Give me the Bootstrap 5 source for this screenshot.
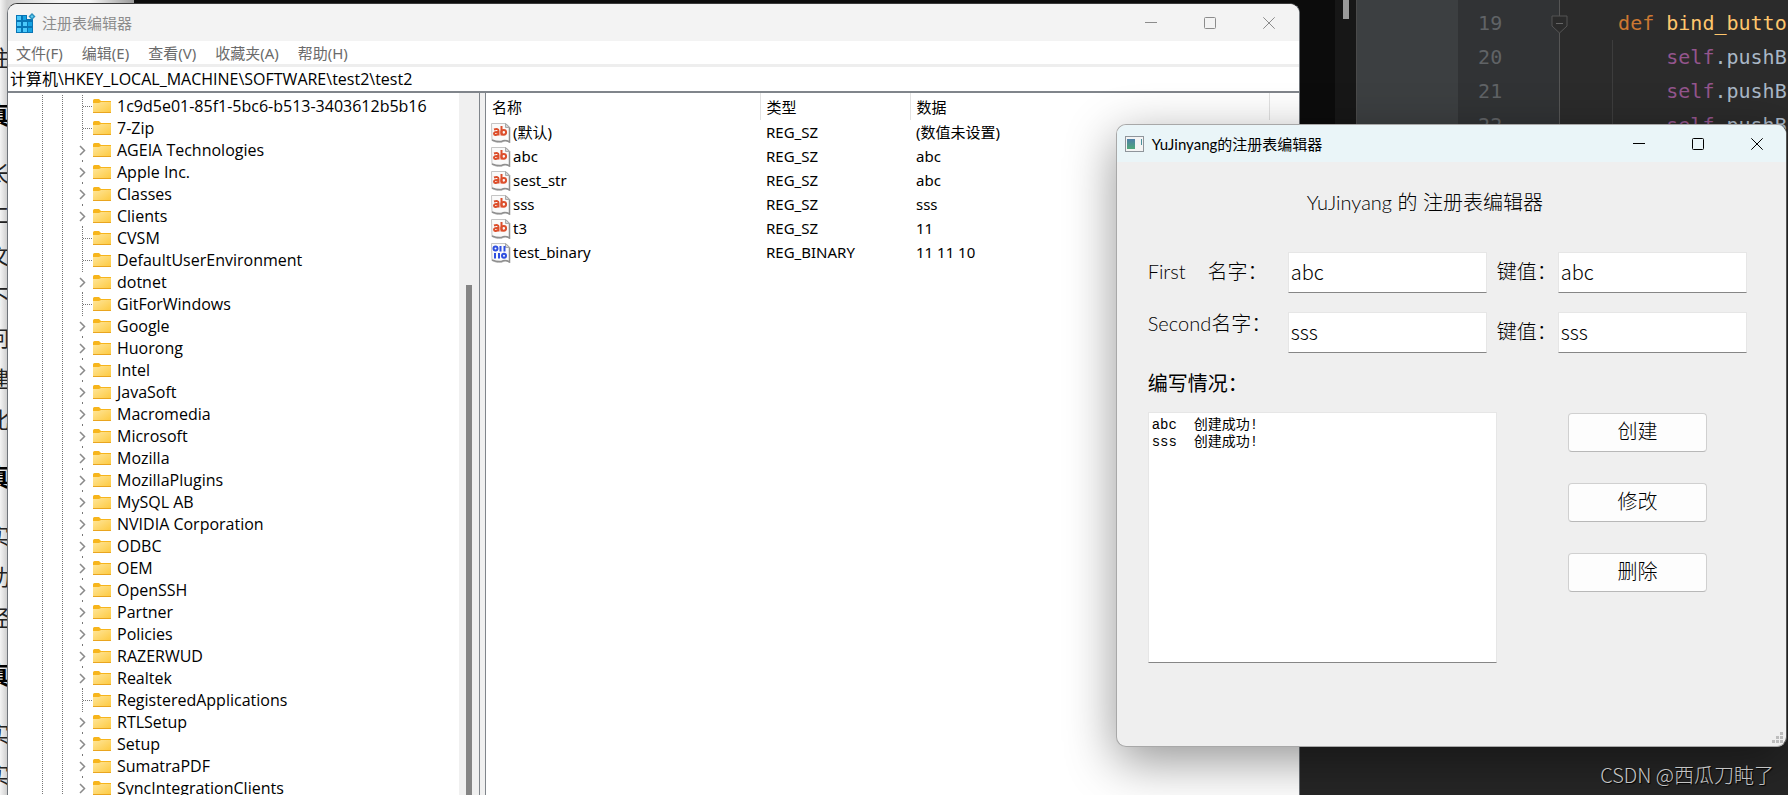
<!DOCTYPE html>
<html lang="zh-CN">
<head>
<meta charset="utf-8">
<meta name="viewport" content="width=device-width, initial-scale=1">
<title>注册表编辑器</title>
<link href="https://cdn.jsdelivr.net/npm/bootstrap@5.3.0/dist/css/bootstrap.min.css" rel="stylesheet">
<style>
  :root { --ui: "Noto Sans", "Noto Sans CJK SC", sans-serif; --form: Lato, "Noto Sans CJK SC", sans-serif; }
  body { font-family: var(--ui); font-size: 15px; line-height: 22px; color: #000; background: #0c0c0c; }
  .desktop { height: 100vh; min-height: 600px; }
  /* background windows */
  .note-page { width: 134px; background: linear-gradient(90deg, #f4f4f4, #cfcfcf 7px, #f4f4f4 60px, #f4f4f4 90px, #999); padding-top: 38px; font: 22px/41px "Liberation Serif", "Noto Sans CJK SC", serif; color: #222; }
  .note-page p { margin: 0 0 0 -12px; height: 41px; }
  .note-page .topic { font-weight: 700; height: 75px; line-height: 75px; margin-left: -14px; font-size: 24px; color: #000; }
  .term-scroll { width: 22px; background: #171717; border-right: 1px solid #4a4a4a; }
  .term-thumb { width: 6px; height: 19px; margin-left: 8px; background: #9a9a9a; }
  .ide { width: 24.1%; font: 20px/34px "DejaVu Sans Mono", monospace; background: #2b2b2b; color: #a9b7c6; white-space: pre; }
  .ide-side { width: 101px; background: #3c3f41; }
  .ide-gutter { width: 102px; padding: 6px 0 0 20px; background: #313335; color: #606366; border-right: 1px solid #555; }
  .ide-gutter svg { position: absolute; right: -9px; top: 15px; }
  .ide-code { padding: 6px 0 0 58px; }
  .kw { color: #cc7832; } .fn { color: #ffc66d; } .me { color: #94558d; }
  .ide-block { margin-left: -6px; padding-left: 5px; border-left: 1px solid #3d3d3d; }
  .ide-low { left: 72.6%; top: 722px; background: #262626; }
  /* windows */
  .win { position: absolute; display: flex; flex-direction: column; overflow: hidden; }
  .win-title { height: 37px; flex: none; }
  .win-btn { width: 59px; height: 37px; border: 0; background: none; padding: 0; display: flex; align-items: center; justify-content: center; color: inherit; }
  .regedit { left: 7px; right: 27.3%; top: 3px; bottom: 0; border: 1px solid #6e7379; border-top-color: #3a3a3a; border-bottom: 0; border-radius: 10px 10px 0 0; background: #fff; }
  .regedit .win-title { background: #f3f3f3; color: #8c8c8c; }
  .title-icon { margin: 0 6px 0 8px; }
  .regedit .menu-bar { height: 23px; gap: 19px; padding-left: 8px; }
  .menu-bar a { color: #6b6b6b; text-decoration: none; }
  .address { height: 29px; border: 0; border-top: 3px solid #eee; border-bottom: 2px solid #80858b; padding: 0 2px 2px; font-family: "Open Sans", "Noto Sans CJK SC", sans-serif; font-size: 16px; line-height: 22px; color: #000; outline: 0; flex: none; width: 100%; }
  .panes { min-height: 0; }
  .tree-pane { width: 472px; border-right: 1px solid #80858b; }
  .tree { margin: 0; padding: 2px 0 0; font-family: "Open Sans", sans-serif; font-size: 16px; }
  .tree li { height: 22px; display: flex; align-items: center; padding-left: 71px; white-space: pre;
    background: repeating-linear-gradient(#777 0 1px, #fff 1px 2px) 34px 0 / 1px 22px no-repeat, repeating-linear-gradient(#777 0 1px, #fff 1px 2px) 54px 0 / 1px 22px no-repeat; }
  .tree .twig { width: 14px; height: 22px; flex: none; }
  .tree .folder { margin-right: 6px; flex: none; }
  .tree-scroll { width: 20px; background: #f0f0f0; }
  .tree-thumb { width: 6px; margin: 192px 0 0 7px; background: #858585; }
  .splitter { width: 6px; background: #f0f0f0; border-right: 1px solid #80858b; }
  .values { width: 784px; table-layout: fixed; border-collapse: collapse; font-size: 15px; }
  .values th { font-weight: 400; height: 27px; padding: 0 0 0 6px; border-right: 1px solid #e2e2e2; }
  .values td { height: 24px; padding: 0 0 0 6px; white-space: nowrap; }
  .values td:first-child { padding-left: 5px; }
  .values svg { margin-right: 2px; }
  .app { left: 62.4%; right: 1px; top: 124px; height: 623px; border: 1px solid #a8a8a8; border-right-color: #555; border-radius: 10px; background: #efefef; box-shadow: 0 14px 50px rgba(0,0,0,.42); font-family: var(--form); }
  .app .win-title { background: #eaf5f8; }
  .app-body { padding: 28px 39px 0 31px; font-size: 20px; font-weight: 300; }
  .app-head { height: 24px; line-height: 24px; margin-bottom: 38px; padding-left: 159px; font-size: 20px; font-weight: 300; }
  .pair { margin-bottom: 19px; }
  .pair label { padding-bottom: 3px; }
  .name-label { width: 140px; }
  .key-label { width: 71px; padding-left: 10px; }
  .box, .log { min-width: 0; border: 1px solid #e6e6e6; border-bottom-color: #868686; background: #fff; outline: 0; font-weight: 300; color: #000; }
  .box { height: 41px; padding: 0 2px 2px; font-size: 20px; font-family: "Noto Sans CJK SC", sans-serif; flex: 199 1 0; }
  .box-key { flex-grow: 189; }
  .log-label { margin-bottom: 18px; }
  .log { flex: none; width: 58.3%; height: 251px; padding: 4px 3px; resize: none; font: 14px/17px "Liberation Mono", "Noto Sans CJK SC", monospace; }
  .acts { gap: 31px; padding: 1px 0 0 71px; }
  .act { height: 39px; width: 139px; border: 1px solid #d0d0d0; border-bottom-color: #b8b8b8; border-radius: 4px; background: #fdfdfd; padding: 0 0 3px; font-size: 20px; font-weight: 300; color: #000; }
  .grip { position: absolute; right: 3px; bottom: 3px; }
  .watermark { right: 14px; bottom: 8px; font: 20px/24px "Noto Sans CJK SC", sans-serif; font-weight: 300; color: #c4c4c4; text-shadow: 1px 1px 1px #000; }
</style>
</head>
<body class="overflow-hidden">
<svg class="position-absolute" width="0" height="0" aria-hidden="true">
  <defs><linearGradient id="fold" x1="0" y1="0" x2="1" y2="1"><stop offset="0" stop-color="#ffe69a"/><stop offset="1" stop-color="#fdc93f"/></linearGradient></defs>
  <symbol id="i-folder" viewBox="0 0 18 14"><path d="M0 1.5Q0 0 1.5 0H6L8 2H18V6H0Z" fill="#f7b51c"/><path d="M0 4H6L8 3H18V14H0Z" fill="url(#fold)"/><path d="M0 13.5H18" stroke="#e9a51f"/></symbol>
  <symbol id="i-sz" viewBox="0 0 20 20"><path d="M.5 .5H15L18.500 4V19Q14 17 11 19T1 17.500Z" fill="#fafafa" stroke="#c4c4c4"/><path d="M18.500 4V19Q14 16.500 10.500 18.500Q6 19 1 17" fill="none" stroke="#8f8f8f" stroke-width="1.500"/><path d="M14.500 .5V4.500H18.500Z" fill="#d4d4d4" stroke="#aaa"/><g fill="none" stroke="#dc4f2c" stroke-width="2"><path d="M3 6.500Q7.500 5 7.500 8V12.500M7.500 9Q3 8.500 3 10.700Q3.500 13 7.500 11M10.500 3V12.500"/><circle cx="12.700" cy="9.300" r="2.400"/></g></symbol>
  <symbol id="i-bin" viewBox="0 0 20 20"><path d="M.5 .5H15L18.500 4V19Q14 17 11 19T1 17.500Z" fill="#fafafa" stroke="#c4c4c4"/><path d="M18.500 4V19Q14 16.500 10.500 18.500Q6 19 1 17" fill="none" stroke="#8f8f8f" stroke-width="1.500"/><path d="M14.500 .5V4.500H18.500Z" fill="#d4d4d4" stroke="#aaa"/><g fill="none" stroke="#2f4fe0" stroke-width="2"><circle cx="4.500" cy="5.500" r="2"/><path d="M9.500 3V8.500M13.500 3V8.500M4 10V15.500M8 10V15.500"/><circle cx="13" cy="12.700" r="2"/></g></symbol>
  <symbol id="i-min" viewBox="0 0 12 12"><path d="M0 5.500H12" stroke="currentColor"/></symbol>
  <symbol id="i-max" viewBox="0 0 12 12"><rect x=".5" y=".5" width="11" height="11" rx="1" fill="none" stroke="currentColor"/></symbol>
  <symbol id="i-close" viewBox="0 0 12 12"><path d="M.3 .3L11.700 11.700M11.700 .3L.3 11.700" stroke="currentColor"/></symbol>
</svg>

<main class="desktop position-relative overflow-hidden d-flex">
  <aside class="note-page overflow-hidden">
    <p>注</p><p class="topic">真</p><p>长</p><p>二</p><p>文</p><p>下</p><p>何</p><p>建</p><p>比</p><p class="topic">真</p><p>实</p><p>功</p><p>径</p><p class="topic">真</p><p>实</p><p>实</p>
  </aside>
  <div class="flex-grow-1"></div>
  <div class="term-scroll"><div class="term-thumb"></div></div>
  <section class="ide d-flex overflow-hidden">
    <div class="ide-side flex-shrink-0"></div>
    <div class="ide-gutter flex-shrink-0 position-relative"><div>19</div><div>20</div><div>21</div><div>22</div><svg width="17" height="19" viewBox="0 0 17 19"><path d="M1 1H16V11L8.500 18L1 11Z" fill="#2b2b2b" stroke="#555"/><path d="M5 8.500H12" stroke="#666"/></svg></div>
    <div class="ide-code"><div><span class="kw">def</span> <span class="fn">bind_buttons</span></div><div class="ide-block"><div>    <span class="me">self</span>.pushButton</div><div>    <span class="me">self</span>.pushButton</div><div>    <span class="me">self</span>.pushButton</div></div></div>
  </section>
  <div class="ide-low position-absolute end-0 bottom-0"></div>

  <section class="win regedit" aria-label="注册表编辑器">
    <header class="win-title d-flex align-items-center">
      <svg class="title-icon" width="20" height="20" viewBox="0 0 20 20"><path d="M0 2H11V6H17V20H0Z" fill="#0875b5"/><path d="M1 3H5V7H1ZM1 9H5V13H1ZM7 9H11V13H7ZM1 15H5V19H1ZM7 15H11V19H7Z" fill="#4cc9fb"/><path d="M7 3H10V7H7ZM12 9H16V13H12ZM12 15H16V19H12Z" fill="#16a3e2"/><path d="M16 0L19.500 3.500L16 7L12.500 3.500Z" fill="#2b8fbd"/><path d="M16 2L17.500 3.500L16 5L14.500 3.500Z" fill="#5fd0f5"/></svg>
      <span>注册表编辑器</span>
      <button class="win-btn ms-auto" aria-label="最小化"><svg width="12" height="12"><use href="#i-min"/></svg></button>
      <button class="win-btn" aria-label="最大化"><svg width="12" height="12"><use href="#i-max"/></svg></button>
      <button class="win-btn" aria-label="关闭"><svg width="12" height="12"><use href="#i-close"/></svg></button>
    </header>
    <nav class="menu-bar d-flex align-items-center flex-shrink-0"><a href="#">文件(F)</a><a href="#">编辑(E)</a><a href="#">查看(V)</a><a href="#">收藏夹(A)</a><a href="#">帮助(H)</a></nav>
    <input class="address" aria-label="地址" value="计算机\HKEY_LOCAL_MACHINE\SOFTWARE\test2\test2">
    <div class="panes d-flex flex-grow-1">
      <div class="tree-pane d-flex overflow-hidden flex-shrink-0">
        <ul class="tree list-unstyled flex-grow-1" id="tree"></ul>
        <div class="tree-scroll d-flex flex-shrink-0"><div class="tree-thumb"></div></div>
      </div>
      <div class="splitter flex-shrink-0"></div>
      <div class="flex-grow-1 overflow-hidden">
        <table class="values">
          <colgroup><col width="274"><col width="150"><col></colgroup>
          <thead><tr><th>名称</th><th>类型</th><th>数据</th></tr></thead>
          <tbody>
            <tr><td><svg width="20" height="20"><use href="#i-sz"/></svg>(默认)</td><td>REG_SZ</td><td>(数值未设置)</td></tr>
            <tr><td><svg width="20" height="20"><use href="#i-sz"/></svg>abc</td><td>REG_SZ</td><td>abc</td></tr>
            <tr><td><svg width="20" height="20"><use href="#i-sz"/></svg>sest_str</td><td>REG_SZ</td><td>abc</td></tr>
            <tr><td><svg width="20" height="20"><use href="#i-sz"/></svg>sss</td><td>REG_SZ</td><td>sss</td></tr>
            <tr><td><svg width="20" height="20"><use href="#i-sz"/></svg>t3</td><td>REG_SZ</td><td>11</td></tr>
            <tr><td><svg width="20" height="20"><use href="#i-bin"/></svg>test_binary</td><td>REG_BINARY</td><td>11 11 10</td></tr>
          </tbody>
        </table>
      </div>
    </div>
  </section>

  <section class="win app" aria-label="YuJinyang的注册表编辑器">
    <header class="win-title d-flex align-items-center">
      <svg class="ms-2 me-2" width="19" height="16" viewBox="0 0 19 16"><defs><linearGradient id="pic" x1="0" y1="0" x2="0" y2="1"><stop stop-color="#4f7fa8"/><stop offset="1" stop-color="#4fa878"/></linearGradient></defs><rect x=".5" y=".5" width="18" height="15" fill="#f4f4f4" stroke="#8f959b"/><rect x="2" y="3" width="8" height="10" fill="url(#pic)"/><path d="M16.500 3V9" stroke="#4b8f9c"/></svg>
      <span>YuJinyang的注册表编辑器</span>
      <button class="win-btn ms-auto" aria-label="最小化"><svg width="12" height="12"><use href="#i-min"/></svg></button>
      <button class="win-btn" aria-label="最大化"><svg width="12" height="12"><use href="#i-max"/></svg></button>
      <button class="win-btn" aria-label="关闭"><svg width="12" height="12"><use href="#i-close"/></svg></button>
    </header>
    <form class="app-body">
      <h1 class="app-head">YuJinyang 的 注册表编辑器</h1>
      <div class="pair d-flex align-items-center">
        <label class="name-label" for="n1">First &nbsp;&nbsp; 名字：</label><input class="box" id="n1" value="abc">
        <label class="key-label" for="k1">键值：</label><input class="box box-key" id="k1" value="abc">
      </div>
      <div class="pair d-flex align-items-center">
        <label class="name-label align-self-start" for="n2">Second名字：</label><input class="box" id="n2" value="sss">
        <label class="key-label" for="k2">键值：</label><input class="box box-key" id="k2" value="sss">
      </div>
      <label class="log-label d-block fw-normal" for="log">编写情况：</label>
      <div class="d-flex align-items-start">
        <textarea class="log" id="log">abc  创建成功!
sss  创建成功!</textarea>
        <div class="acts d-flex flex-column">
          <button type="button" class="act">创建</button><button type="button" class="act">修改</button><button type="button" class="act">删除</button>
        </div>
      </div>
    </form>
    <svg class="grip" width="11" height="11" viewBox="0 0 11 11"><path d="M8 0h3v3h-3zM8 4h3v3h-3zM4 4h3v3h-3zM8 8h3v3h-3zM4 8h3v3h-3zM0 8h3v3h-3z" fill="#bdbdbd"/></svg>
  </section>
  <div class="watermark position-absolute">CSDN @西瓜刀盹了</div>
</main>
<script src="https://cdn.jsdelivr.net/npm/bootstrap@5.3.0/dist/js/bootstrap.bundle.min.js"></script>
<script>
  // A leading "-" marks a key without children
  const keys = ["-1c9d5e01-85f1-5bc6-b513-3403612b5b16", "-7-Zip", "AGEIA Technologies", "Apple Inc.", "Classes", "Clients", "-CVSM", "-DefaultUserEnvironment", "dotnet", "-GitForWindows", "Google", "Huorong", "Intel", "JavaSoft", "Macromedia", "Microsoft", "Mozilla", "MozillaPlugins", "MySQL AB", "NVIDIA Corporation", "ODBC", "OEM", "OpenSSH", "Partner", "Policies", "RAZERWUD", "Realtek", "-RegisteredApplications", "RTLSetup", "Setup", "SumatraPDF", "SyncIntegrationClients"];
  const leafTwig = '<path d="M3.500 0V22M4 11.500H13" stroke="#777" stroke-dasharray="1 1" fill="none"/>';
  const openTwig = '<path d="M3.500 0V1M3.500 21V22" stroke="#777"/><path d="M1 7L5.500 11.500L1 16" fill="none" stroke="#8a8a8a" stroke-width="1.500"/>';
  document.getElementById("tree").innerHTML = keys.map(k => {
    const leaf = k[0] === "-";
    return `<li><svg class="twig" viewBox="0 0 14 22">${leaf ? leafTwig : openTwig}</svg><svg class="folder" width="18" height="14"><use href="#i-folder"/></svg>${leaf ? k.slice(1) : k}</li>`;
  }).join("");
</script>
</body>
</html>
